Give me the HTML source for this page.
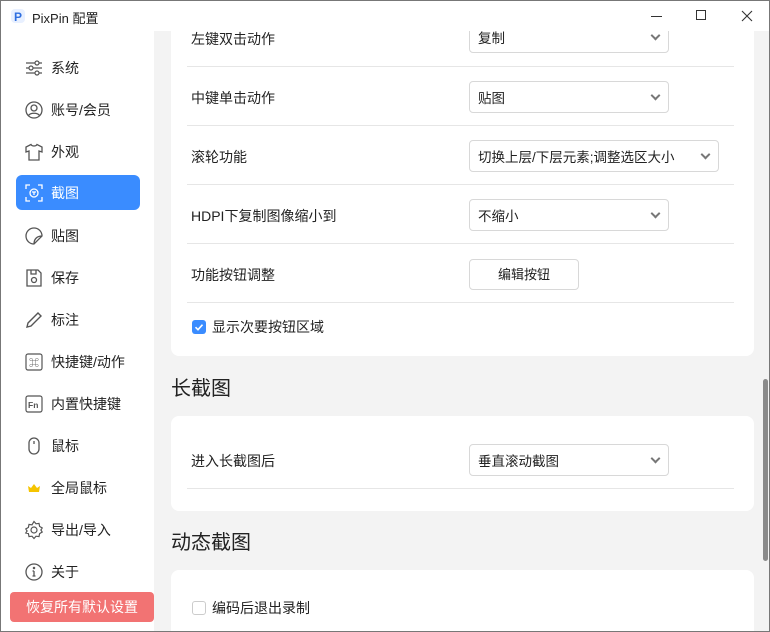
<!DOCTYPE html>
<html style="width:770px;height:632px;overflow:hidden"><head><meta charset="utf-8"><style>
*{margin:0;padding:0;box-sizing:border-box}
body{width:770px;height:632px;overflow:hidden;background:#f3f3f3;font-family:"Liberation Sans","Noto Sans CJK SC",sans-serif;color:#222;position:relative;font-size:14px}
.abs{position:absolute}
#title{left:0;top:0;width:770px;height:31px;background:#fff;z-index:5;border-top:1px solid #777;border-left:1px solid #777}
#side{left:0;top:31px;width:154px;height:601px;background:#fff;border-left:1px solid #777}
.item{position:absolute;left:16px;width:124px;height:35px;border-radius:6px;display:flex;align-items:center;padding-left:8px;font-size:14px}
.item svg{width:20px;height:20px;margin-right:7px;flex:none}
.item.act{background:#3a8cff;color:#fff}
.card{position:absolute;left:171px;width:583px;background:#fff;border-radius:8px}
.lbl{position:absolute;left:191px;font-size:14px;line-height:20px}
.sep{position:absolute;left:187px;width:547px;height:1px;background:#e6e6e6}
.sel{position:absolute;left:469px;width:200px;height:32px;border:1px solid #d8d8d8;border-radius:4px;background:#fff;font-size:13.5px;line-height:33px;padding-left:8px}
.sel:after{content:"";position:absolute;right:9px;top:10px;width:5px;height:5px;border-right:2px solid #777;border-bottom:2px solid #777;transform:rotate(45deg)}
.h{position:absolute;left:171px;font-size:20px}
</style></head><body>
<div id="title" class="abs">
<svg class="abs" style="left:9px;top:7px" width="16" height="16" viewBox="0 0 16 16"><rect x="1" y="1" width="14" height="14" rx="4" fill="#e8f0ff"/><text x="4" y="13" font-size="12" font-weight="bold" fill="#2f6fe0" font-family="Liberation Sans">P</text></svg>
<div class="abs" style="left:31px;top:7px;font-size:13px">PixPin 配置</div>
<div class="abs" style="left:650px;top:15px;width:11px;height:1px;background:#333"></div>
<div class="abs" style="left:695px;top:9px;width:10px;height:10px;border:1px solid #333"></div>
<svg class="abs" style="left:740px;top:9px" width="12" height="12"><path d="M1 1L11 11M11 1L1 11" stroke="#333" stroke-width="1.1"/></svg>
</div>
<div id="side" class="abs"></div>
<div class="item" style="top:50px"><svg viewBox="0 0 20 20" fill="none" stroke="#555" stroke-width="1.2"><path d="M2 5h16M2 10h16M2 15h16"/><circle cx="13" cy="5" r="2" fill="#fff"/><circle cx="7" cy="10" r="2" fill="#fff"/><circle cx="13" cy="15" r="2" fill="#fff"/></svg>系统</div>
<div class="item" style="top:92px"><svg viewBox="0 0 20 20" fill="none" stroke="#555" stroke-width="1.3"><circle cx="10" cy="10" r="8"/><circle cx="10" cy="8" r="3"/><path d="M4.5 15.5c2-3 9-3 11 0"/></svg>账号/会员</div>
<div class="item" style="top:134px"><svg viewBox="0 0 20 20" fill="none" stroke="#555" stroke-width="1.3"><path d="M7 2.5L2 5v5l3 -1v9h10V9l3 1V5l-5-2.5c-1 2-5 2-6 0z"/></svg>外观</div>
<div class="item act" style="top:175px"><svg viewBox="0 0 20 20" fill="none" stroke="#fff" stroke-width="1.3"><path d="M2 6V2h4M14 2h4v4M18 14v4h-4M6 18H2v-4"/><circle cx="10" cy="10" r="4"/><path d="M8 9h4M10 9v3"/></svg>截图</div>
<div class="item" style="top:218px"><svg viewBox="0 0 20 20" fill="none" stroke="#555" stroke-width="1.3"><path d="M18 10a8 8 0 1 0-8 8l8-8zM18 10c-5 0-8 3-8 8"/></svg>贴图</div>
<div class="item" style="top:260px"><svg viewBox="0 0 20 20" fill="none" stroke="#555" stroke-width="1.3"><path d="M3 2h11l3 3v13H3z"/><path d="M7 2v4h5V2"/><circle cx="10" cy="12" r="2.5"/></svg>保存</div>
<div class="item" style="top:302px"><svg viewBox="0 0 20 20" fill="none" stroke="#555" stroke-width="1.4"><path d="M3 17l1-4L14 3l3 3L7 16z"/></svg>标注</div>
<div class="item" style="top:344px"><svg viewBox="0 0 20 20" fill="none" stroke="#555" stroke-width="1.2"><rect x="2" y="2" width="16" height="16" rx="2"/><text x="5" y="14.5" font-size="10" fill="#555" stroke="none">⌘</text></svg>快捷键/动作</div>
<div class="item" style="top:386px"><svg viewBox="0 0 20 20" fill="none" stroke="#555" stroke-width="1.2"><rect x="2" y="2" width="16" height="16" rx="2"/><text x="4" y="14" font-size="8.5" font-weight="bold" fill="#555" stroke="none" font-family="Liberation Sans">Fn</text></svg>内置快捷键</div>
<div class="item" style="top:428px"><svg viewBox="0 0 20 20" fill="none" stroke="#555" stroke-width="1.3"><rect x="5" y="2" width="10" height="16" rx="5"/><path d="M10 5v3"/></svg>鼠标</div>
<div class="item" style="top:470px"><svg viewBox="0 0 20 20"><path d="M5 14l-1-6 3 2 3-4 3 4 3-2-1 6z" fill="#f5c400"/></svg>全局鼠标</div>
<div class="item" style="top:512px"><svg viewBox="0 0 20 20" fill="none" stroke="#555" stroke-width="1.2"><path d="M10 1.5l2 2.3 3-.4.6 3 2.6 1.6-1.3 2 1.3 2-2.6 1.6-.6 3-3-.4-2 2.3-2-2.3-3 .4-.6-3L1.8 13l1.3-2-1.3-2 2.6-1.6.6-3 3 .4z"/><circle cx="10" cy="10" r="3"/></svg>导出/导入</div>
<div class="item" style="top:554px"><svg viewBox="0 0 20 20" fill="none" stroke="#555" stroke-width="1.3"><circle cx="10" cy="10" r="8"/><path d="M10 9v5M8.5 14h3M8.5 9H10"/><circle cx="10" cy="6" r=".6" fill="#555"/></svg>关于</div>
<div class="abs" style="left:10px;top:592px;width:144px;height:30px;background:#f27373;border-radius:4px;color:#fff;font-size:14px;text-align:center;line-height:30px">恢复所有默认设置</div>

<div class="card" style="top:20px;height:336px"></div>
<div class="lbl" style="top:29px">左键双击动作</div>
<div class="sel" style="top:21px;">复制</div>
<div class="sep" style="top:66px"></div>
<div class="lbl" style="top:88px">中键单击动作</div>
<div class="sel" style="top:81px">贴图</div>
<div class="sep" style="top:125px"></div>
<div class="lbl" style="top:147px">滚轮功能</div>
<div class="sel" style="top:140px;width:250px;padding-left:0;text-indent:-2px;padding-left:10px">切换上层/下层元素;调整选区大小</div>
<div class="sep" style="top:184px"></div>
<div class="lbl" style="top:206px">HDPI下复制图像缩小到</div>
<div class="sel" style="top:199px">不缩小</div>
<div class="sep" style="top:243px"></div>
<div class="lbl" style="top:265px">功能按钮调整</div>
<div class="abs" style="left:469px;top:259px;width:110px;height:31px;border:1px solid #d8d8d8;border-radius:4px;background:#fff;text-align:center;line-height:29px;font-size:13px">编辑按钮</div>
<div class="sep" style="top:302px"></div>
<div class="abs" style="left:192px;top:320px;width:14px;height:14px;background:#3a8cff;border-radius:3px"><svg width="14" height="14"><path d="M3.5 7.2l2.5 2.5 4.5-5" stroke="#fff" stroke-width="1.6" fill="none"/></svg></div>
<div class="lbl" style="left:212px;top:317px">显示次要按钮区域</div>
<div class="h" style="top:372px">长截图</div>
<div class="card" style="top:416px;height:95px"></div>
<div class="lbl" style="top:451px">进入长截图后</div>
<div class="sel" style="top:444px">垂直滚动截图</div>
<div class="sep" style="top:488px"></div>
<div class="h" style="top:526px">动态截图</div>
<div class="card" style="top:570px;height:62px;border-radius:8px 8px 0 0"></div>
<div class="abs" style="left:192px;top:601px;width:14px;height:14px;border:1px solid #ccc;border-radius:3px;background:#fff"></div>
<div class="lbl" style="left:212px;top:598px">编码后退出录制</div>
<div class="abs" style="left:763px;top:379px;width:5px;height:182px;background:#8a8a8a;border-radius:3px"></div>
<div class="abs" style="left:0;top:631px;width:770px;height:1px;background:#777"></div>
<div class="abs" style="left:769px;top:0;width:1px;height:632px;background:#777;z-index:6"></div>
</body></html>
